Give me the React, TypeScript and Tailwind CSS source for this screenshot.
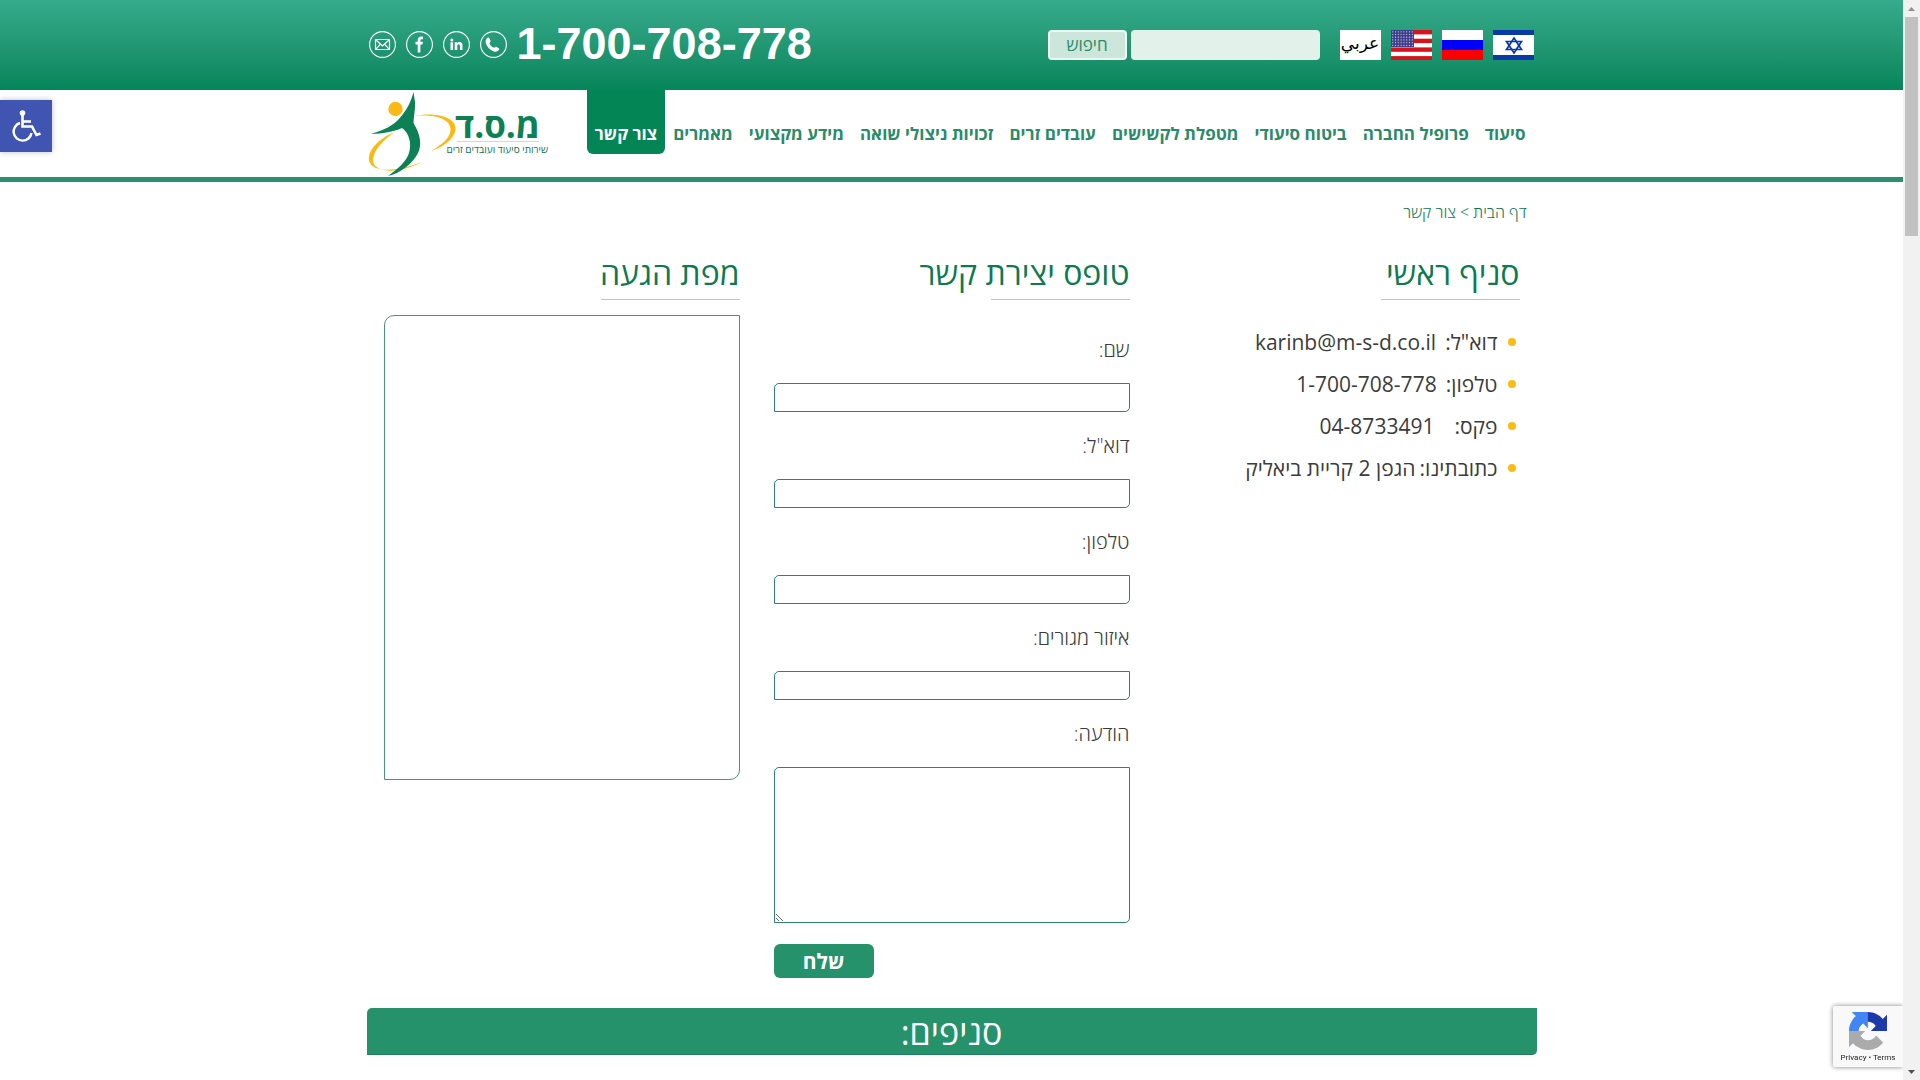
import React from "react";

const navItems = [
  "סיעוד",
  "פרופיל החברה",
  "ביטוח סיעודי",
  "מטפלת לקשישים",
  "עובדים זרים",
  "זכויות ניצולי שואה",
  "מידע מקצועי",
  "מאמרים",
  "צור קשר",
];

const details = [
  { label: 'דוא"ל:', gap: "ms-[9px]", value: "karinb@m-s-d.co.il" },
  { label: "טלפון:", gap: "ms-[9px]", value: "1-700-708-778" },
  { label: "פקס:", gap: "ms-5", value: "04-8733491" },
  { label: "כתובתינו:", gap: "ms-1", value: "הגפן 2 קריית ביאליק" },
];

const fields = [
  { id: "name", label: "שם:", type: "text" },
  { id: "email", label: 'דוא"ל:', type: "email" },
  { id: "phone", label: "טלפון:", type: "tel" },
  { id: "area", label: "איזור מגורים:", type: "text" },
];

function IsraelFlag() {
  return (
    <svg viewBox="0 0 41 30" className="h-[30px] w-[41px]">
      <rect width="41" height="30" fill="#fff" />
      <rect width="41" height="5" fill="#0a3aa8" />
      <rect y="25" width="41" height="5" fill="#0a3aa8" />
      <g fill="none" stroke="#0a3aa8" strokeWidth="1.7">
        <path d="M21 8 28.500 19.500H13.500Z" />
        <path d="M21 23 28.500 11.500H13.500Z" />
      </g>
    </svg>
  );
}

function RussiaFlag() {
  return (
    <svg viewBox="0 0 41 30" className="h-[30px] w-[41px]">
      <rect width="41" height="10" fill="#fff" />
      <rect y="10" width="41" height="10" fill="#0000fb" />
      <rect y="20" width="41" height="10" fill="#fb0000" />
    </svg>
  );
}

function UsaFlag() {
  const stripes = [0, 1, 2, 3];
  const dots = [];
  for (let y = 0; y < 6; y++) for (let x = 0; x < 8; x++) dots.push([x * 2.8 + 1.7, y * 2.7 + 1.8]);
  return (
    <svg viewBox="0 0 41 30" className="h-[30px] w-[41px]">
      <rect width="41" height="30" fill="#fff" />
      {stripes.map((s) => (
        <rect key={s} y={s * 8.7} width="41" height="4.4" fill="#d8131d" />
      ))}
      <rect width="23" height="17" fill="#3f3f8c" />
      {dots.map(([x, y]) => (
        <circle key={`${x}-${y}`} cx={x} cy={y} r="0.6" fill="#d5d5ee" />
      ))}
    </svg>
  );
}

function ArabicFlag() {
  return (
    <span
      lang="ar"
      className="flex h-[30px] w-[41px] items-center justify-center bg-white pb-1 font-['DejaVu_Sans',sans-serif] text-[17px] leading-[26px] text-black"
    >
      عربي
    </span>
  );
}

const circle = <circle cx="13.5" cy="13.5" r="12.9" fill="none" stroke="#fff" strokeWidth="1.1" />;

function MailIcon() {
  return (
    <svg viewBox="0 0 27 27" className="size-[27px]">
      {circle}
      <g fill="none" stroke="#fff" strokeWidth="1.2">
        <rect x="6.5" y="8.5" width="14" height="10" rx="0.5" />
        <path d="M6.500 8.500 13.500 15 20.500 8.500M6.500 18.500 11.500 13.200M20.500 18.500 15.500 13.200" />
      </g>
    </svg>
  );
}

function FacebookIcon() {
  return (
    <svg viewBox="0 0 27 27" className="size-[27px]">
      {circle}
      <path
        fill="#fff"
        d="M11.700 21.500v-8H9.500v-2.700h2.200V9.200c0-2.400 1.400-3.600 3.500-3.600.7 0 1.300 0 1.800.1v2.500h-1.300c-1 0-1.300.5-1.300 1.300v1.300h2.500l-.4 2.700h-2.100v8Z"
      />
    </svg>
  );
}

function LinkedinIcon() {
  return (
    <svg viewBox="0 0 27 27" className="size-[27px]">
      {circle}
      <g fill="#fff">
        <circle cx="8.8" cy="9" r="1.5" />
        <rect x="7.5" y="11.3" width="2.6" height="7.7" />
        <path d="M11.700 11.300h2.500v1.100c.5-.8 1.300-1.300 2.400-1.300 2.100 0 2.900 1.300 2.900 3.600V19h-2.600v-4c0-1.100-.3-1.800-1.200-1.800s-1.400.7-1.400 1.800v4h-2.600Z" />
      </g>
    </svg>
  );
}

function PhoneIcon() {
  return (
    <svg viewBox="0 0 27 27" className="size-[27px]">
      {circle}
      <path
        fill="#fff"
        d="M7.300 7c1-.8 1.700-.5 2.200.5l.9 2c.4.9.1 1.400-.5 1.900-.5.400-.6.800-.3 1.400.9 1.700 2 2.900 3.700 3.800.6.300 1 .2 1.400-.4.5-.6 1.100-.7 1.900-.3l1.900 1.100c.9.500 1 1.200.3 2-1.400 1.600-3 2.100-5.100 1.400-3.900-1.400-6.700-4.300-7.900-8.300-.6-2 .1-3.900 1.500-5.100Z"
      />
    </svg>
  );
}

function Logo() {
  return (
    <svg viewBox="0 0 184 86" className="h-[86px] w-[184px]" role="img" aria-label="מ.ס.ד">
      <circle cx="28.5" cy="19" r="7.2" fill="#fdb913" />
      <path
        fill="#fdb913"
        d="M47 26C66 22 88 26 88.500 38c.3 10-12 19-24.500 23 10-6 20-13 19.500-22C83 28 66 24 47 26Z"
      />
      <path
        fill="#fdb913"
        d="M28 42C13 48 1 59 2 70c1.200 11 22 14 53 2-16 8-30 10-38 8C8 78 5 74 6.500 67 8 59 17 49 28 42Z"
      />
      <path
        fill="#0b8155"
        d="M46.500 2C44 12 39 22 30 31 23 37.500 14 41 4 44c12-.5 22-2 31-6C42 43 45 53 42 63 39.500 71 31 79 21 86c12-2.500 24-12 29.500-22 5-9.500 2.500-20-3.500-30C45.500 32 48.500 22 48 12Z"
      />
      <text
        x="173"
        y="48"
        direction="rtl"
        fill="#0b8155"
        className="font-['Open_Sans',sans-serif] text-[35px] font-bold"
      >
        מ.ס.ד
      </text>
      <path d="M90 51.500H172" stroke="#f7cdb0" strokeWidth="1" />
      <text
        x="181"
        y="63"
        direction="rtl"
        fill="#0f7350"
        className="font-['Open_Sans',sans-serif] text-[10px] font-medium"
      >
        שירותי סיעוד ועובדים זרים
      </text>
    </svg>
  );
}

function Heading({ children }: { children: React.ReactNode }) {
  return (
    <h2 className="text-[32px] leading-[47px] font-normal text-[#0d7a52]">
      {children}
      <span className="mt-[3px] block h-px w-[139px] bg-[#e3c84a]" />
    </h2>
  );
}

export default function App() {
  return (
    <div
      dir="rtl"
      className="min-h-screen bg-white pr-[17px] font-['Open_Sans','Noto_Sans',sans-serif] text-[#3c3c3c]"
    >
      <header>
        <div className="bg-linear-to-b from-[#35ab8c] to-[#04855a]">
          <div className="mx-auto flex h-[90px] max-w-[1170px] items-center pr-[3px] pl-[2px]">
            <ul className="flex gap-[10px]">
              <li><a href="#he" aria-label="עברית"><IsraelFlag /></a></li>
              <li><a href="#ru" aria-label="Русский"><RussiaFlag /></a></li>
              <li><a href="#en" aria-label="English"><UsaFlag /></a></li>
              <li><a href="#ar"><ArabicFlag /></a></li>
            </ul>
            <form className="mr-5 flex gap-1" onSubmit={(e) => e.preventDefault()}>
              <input
                type="search"
                aria-label="חיפוש"
                className="h-[30px] w-[189px] rounded-[4px] bg-[#e3f1eb] px-2"
              />
              <button className="flex h-[30px] w-[79px] items-center justify-center rounded-[4px] border-2 border-[#f0f8f4] bg-[#cde6dc] text-[17px] leading-6 font-normal text-[#2a8b69]">
                חיפוש
              </button>
            </form>
            <div className="mr-auto flex items-center pb-[2px]">
              <a
                href="tel:1700708778"
                dir="ltr"
                className="font-['Liberation_Sans',Arial,sans-serif] text-[45px] leading-[50px] font-bold text-white"
              >
                1-700-708-778
              </a>
              <ul className="mr-[10px] flex gap-[10px]">
                <li><a href="#phone" aria-label="טלפון"><PhoneIcon /></a></li>
                <li><a href="#linkedin" aria-label="LinkedIn"><LinkedinIcon /></a></li>
                <li><a href="#facebook" aria-label="Facebook"><FacebookIcon /></a></li>
                <li><a href="#mail" aria-label="דואר"><MailIcon /></a></li>
              </ul>
            </div>
          </div>
        </div>
        <div className="border-b-[5px] border-[#2a906d]">
          <div className="mx-auto flex h-[87px] max-w-[1170px] items-start justify-between">
            <nav className="pr-[3px]">
              <ul className="flex">
                {navItems.map((item, i) => (
                  <li key={item}>
                    <a
                      href="#"
                      className={
                        i === navItems.length - 1
                          ? "block rounded-b-[6px] bg-[#048556] px-2 pt-8 pb-2 text-[17px] leading-6 font-bold text-white"
                          : "block px-2 pt-8 pb-2 text-[17px] leading-6 font-bold text-[#2a8b69]"
                      }
                    >
                      {item}
                    </a>
                  </li>
                ))}
              </ul>
            </nav>
            <a href="#home"><Logo /></a>
          </div>
        </div>
      </header>

      <main className="mx-auto max-w-[1170px]">
        <nav aria-label="breadcrumb" className="px-[10px] pt-5 text-[16px] leading-5 font-light text-[#0d7a52]">
          <a href="#home">דף הבית</a> &gt; <span>צור קשר</span>
        </nav>

        <div className="mt-[27px] grid grid-cols-3">
          <section className="px-[17px]">
            <Heading>סניף ראשי</Heading>
            <ul className="mt-[21px] text-[21px] leading-[42px] font-normal">
              {details.map((d) => (
                <li key={d.label} className="flex items-center">
                  <span className="mr-1 ml-[10px] size-2 rounded-full bg-[#fdbb12]" />
                  <span>{d.label}</span>
                  <span className={d.gap}>
                    <bdi>{d.value}</bdi>
                  </span>
                </li>
              ))}
            </ul>
          </section>

          <section className="px-[17px]">
            <Heading>טופס יצירת קשר</Heading>
            <form className="pt-4" onSubmit={(e) => e.preventDefault()}>
              {fields.map((f) => (
                <div key={f.id}>
                  <label htmlFor={f.id} className="block text-[20px] leading-[67px] font-light">
                    {f.label}
                  </label>
                  <input
                    id={f.id}
                    type={f.type}
                    className="block h-[29px] w-full rounded-tl-[5px] rounded-br-[5px] border border-[#2a8465] px-2"
                  />
                </div>
              ))}
              <label htmlFor="message" className="block text-[20px] leading-[67px] font-light">
                הודעה:
              </label>
              <textarea
                id="message"
                className="block h-[156px] w-full rounded-tl-[5px] rounded-br-[5px] border border-[#2a8465] p-2"
              />
              <div className="flex justify-end pt-[21px]">
                <button className="h-[34px] w-[100px] rounded-[6px] bg-[#25926c] text-[21px] leading-[34px] font-bold text-white">
                  שלח
                </button>
              </div>
            </form>
          </section>

          <section className="px-[17px]">
            <Heading>מפת הגעה</Heading>
            <div className="mt-[15px] h-[465px] rounded-tl-[10px] rounded-br-[10px] border border-[#4a9479]" />
          </section>
        </div>

        <h2 className="mt-[30px] h-[47px] rounded-tl-[5px] rounded-br-[5px] border-b border-[#1f7d5c] bg-[#25926c] text-center text-[34px] leading-[48px] font-normal text-white">
          סניפים:
        </h2>
      </main>

      <button
        aria-label="נגישות"
        className="fixed top-[100px] left-0 flex size-[52px] items-center justify-center bg-[#4054b2] shadow-[0_0_6px_rgba(0,0,0,0.25)]"
      >
        <svg viewBox="0 0 32 34" className="h-[34px] w-8" fill="none" stroke="#fff" strokeWidth="2.4">
          <circle cx="12.5" cy="4" r="2.8" fill="#fff" stroke="none" />
          <path d="M12.500 6V17.500H22L26.500 26L30.500 24.500M13 12.500H21" strokeWidth="2.6" />
          <path d="M10 14A9 9 0 1 0 21.500 24" />
        </svg>
      </button>

      <aside
        dir="ltr"
        className="fixed right-[17px] bottom-[13px] flex h-[61px] w-[70px] flex-col items-center rounded-l-[2px] bg-[#f9f9f9] pt-[6px] shadow-[0_0_5px_gray]"
      >
        <svg viewBox="0 0 64 64" className="size-[38px]">
          <path
            fill="#1c3aa9"
            d="M64 31.955l-.033-1.370V4.687l-7.160 7.160C50.948 4.674 42.033.093 32.050.093c-10.400 0-19.622 4.960-25.458 12.640l11.736 11.860a15.550 15.550 0 0 1 4.754-5.334c2.050-1.600 4.952-2.906 8.968-2.906.485 0 .86.057 1.135.163 4.976.393 9.288 3.140 11.828 7.124l-8.307 8.307L64 31.953"
          />
          <path
            fill="#4285f4"
            d="M31.862.094l-1.370.033H4.594l7.160 7.160C4.580 13.147 0 22.060 0 32.046c0 10.400 4.960 19.622 12.640 25.458L24.500 45.768a15.550 15.550 0 0 1-5.334-4.754c-1.600-2.050-2.906-4.952-2.906-8.968 0-.485.057-.86.163-1.135.393-4.976 3.140-9.288 7.124-11.828l8.307 8.307L31.860.095"
          />
          <path
            fill="#ababab"
            d="M.001 32.045l.033 1.370v25.898l7.160-7.160c5.860 7.173 14.774 11.754 24.760 11.754 10.400 0 19.622-4.960 25.458-12.640l-11.736-11.860a15.550 15.550 0 0 1-4.754 5.334c-2.050 1.600-4.952 2.906-8.968 2.906-.485 0-.86-.057-1.135-.163-4.976-.393-9.288-3.140-11.828-7.124l8.307-8.307c-10.522.04-22.400.066-27.295-.005"
          />
        </svg>
        <p className="mt-[2px] font-['Roboto',sans-serif] text-[8px] leading-[12px] whitespace-nowrap text-[#222]">
          <a href="#privacy">Privacy</a>
          <span aria-hidden="true"> • </span>
          <a href="#terms">Terms</a>
        </p>
      </aside>

      <div className="fixed inset-y-0 right-0 flex w-[17px] flex-col items-center justify-between bg-[#f1f1f1]">
        <div className="flex flex-col items-center">
          <svg viewBox="0 0 17 17" className="size-[17px]"><path d="M5 11h7L8.500 7Z" fill="#8f8f8f" /></svg>
          <div className="h-[219px] w-[13px] bg-[#c1c1c1]" />
        </div>
        <svg viewBox="0 0 17 17" className="size-[17px]"><path d="M5 7h7l-3.500 4Z" fill="#505050" /></svg>
      </div>
    </div>
  );
}
